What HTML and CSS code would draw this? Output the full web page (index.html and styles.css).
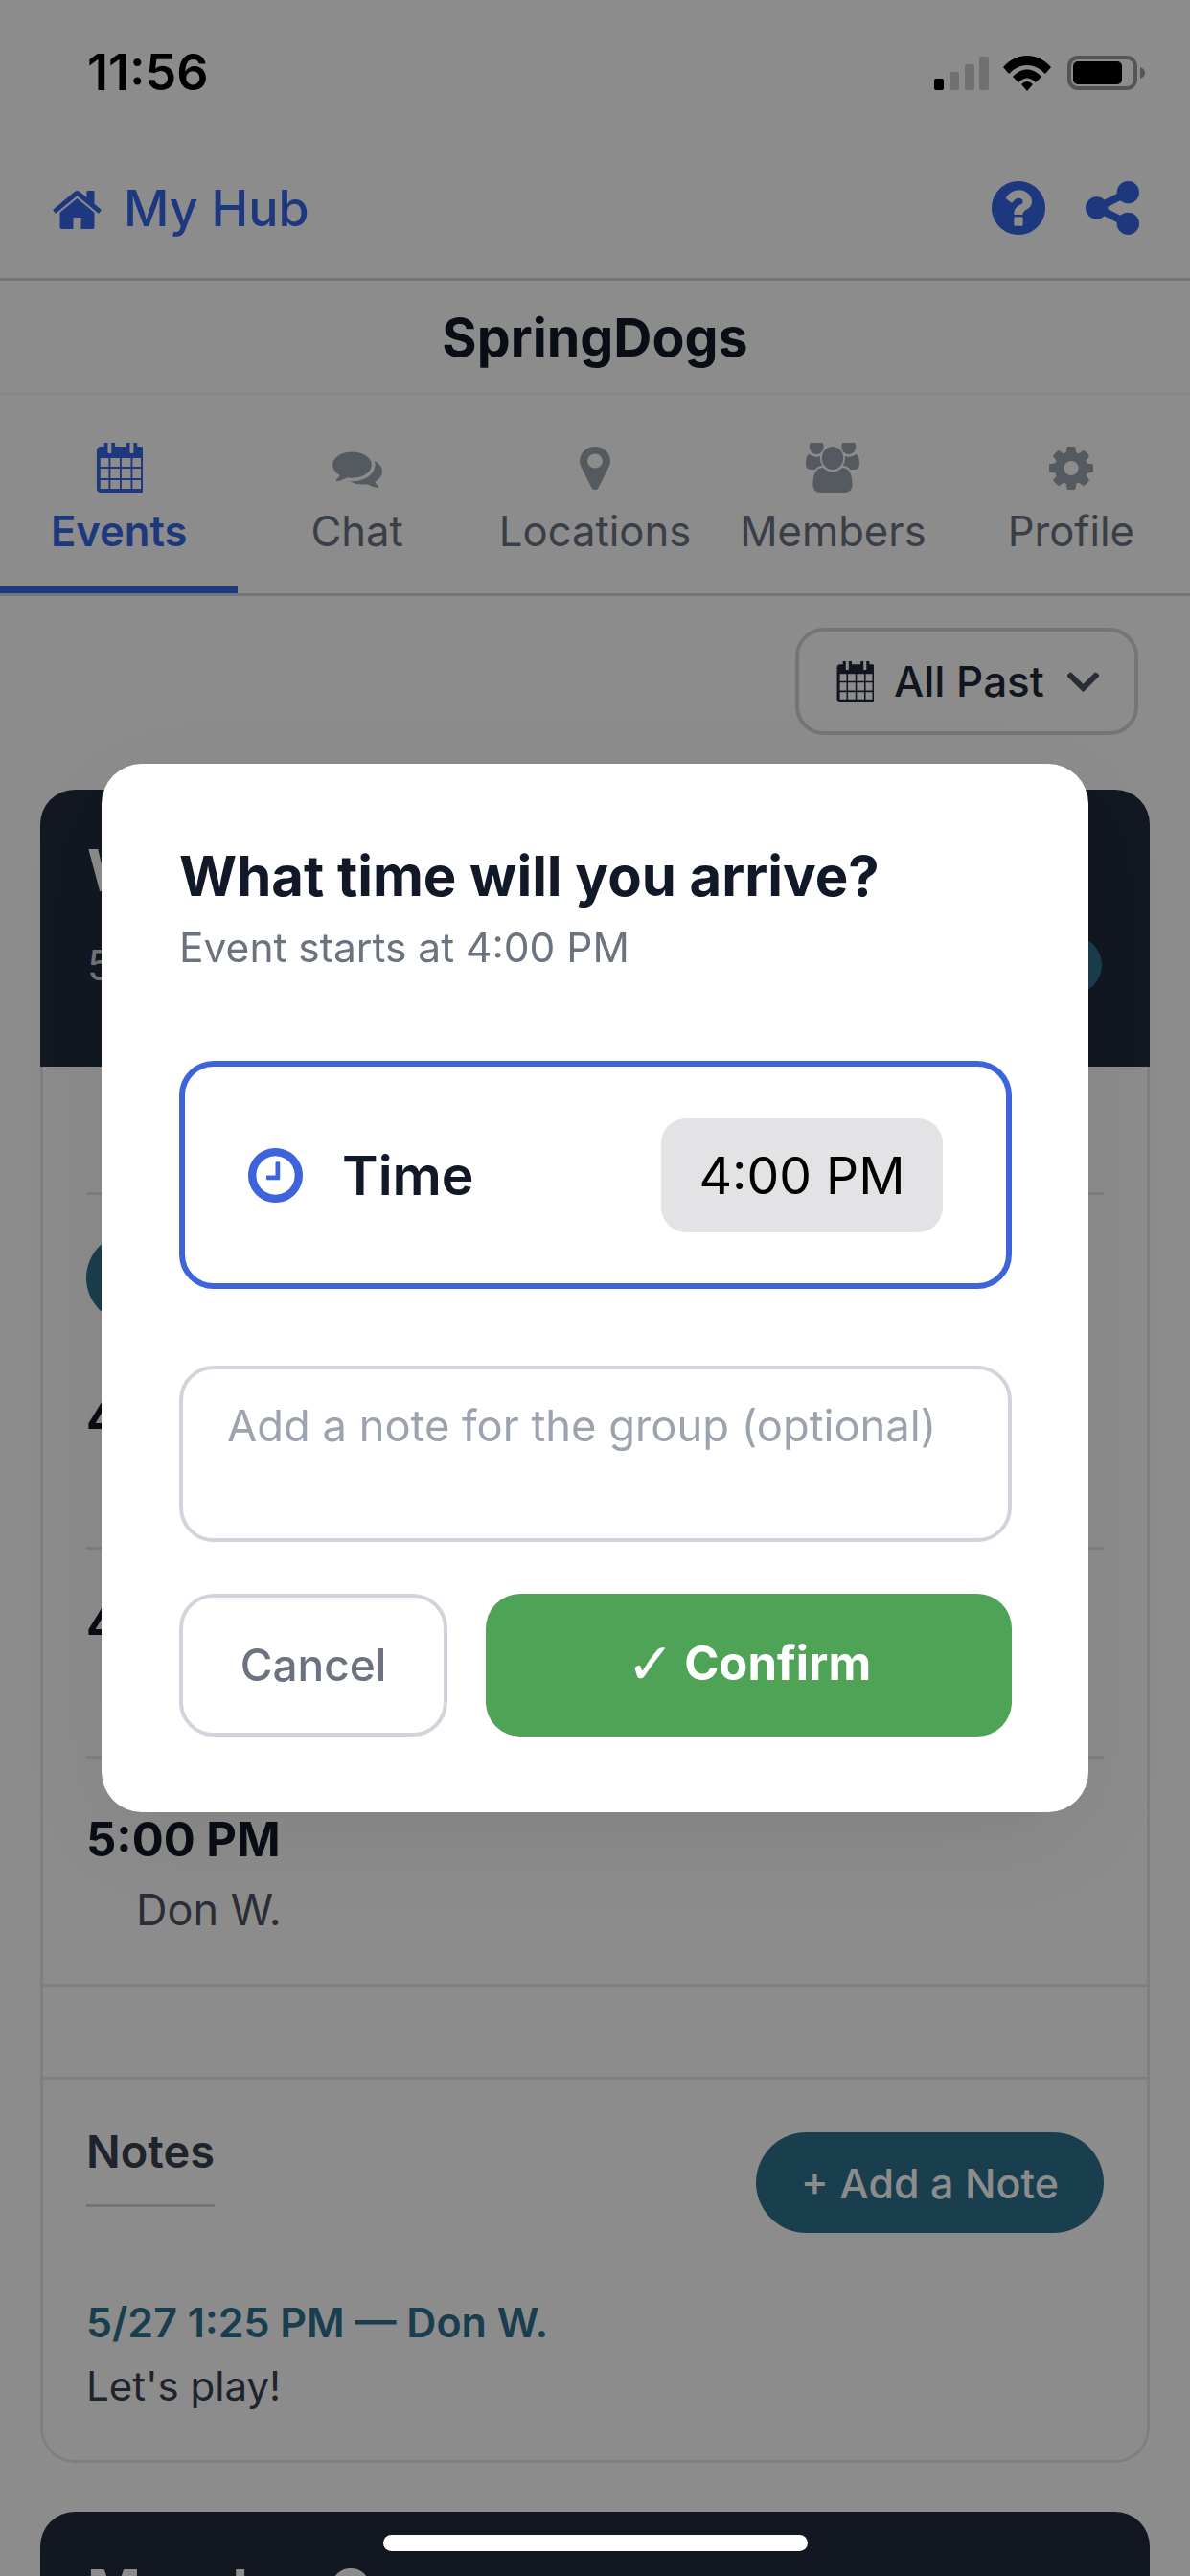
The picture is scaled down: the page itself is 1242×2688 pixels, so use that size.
FILE: index.html
```html
<!DOCTYPE html>
<html lang="en">
<head>
  <meta charset="UTF-8">
  <title>SpringDogs</title>
  <link rel="stylesheet" href="styles.css">
</head>
<body>
<div class="page">
  <!-- status bar -->
  <div class="status">
    <span class="clock">11:56</span>
    <div class="status-icons">
      <svg class="signal" viewBox="0 0 57 35"><rect y="23" width="10" height="12" rx="2" fill="#000"/><rect x="16" y="16" width="10" height="19" rx="2" fill="#ccc"/><rect x="32" y="8" width="10" height="27" rx="2" fill="#ccc"/><rect x="47" width="10" height="35" rx="2" fill="#ccc"/></svg>
      <svg class="wifi" viewBox="0 0 50 37"><path d="M0 12 C14 -4 36 -4 50 12 L44 19 C32 7 18 7 6 19 Z"/><path d="M10 22 C19 12 31 12 40 22 L34 28 C28 22 22 22 16 28 Z"/><path d="M19 30 C23 26 27 26 31 30 L25 37 Z"/></svg>
      <svg class="battery" viewBox="0 0 81 36"><rect x="2" y="2" width="69" height="32" rx="9" fill="none" stroke="#9b9b9b" stroke-width="4"/><rect x="6" y="6" width="51" height="24" rx="5" fill="#000"/><path d="M76 12 C79 13 81 15 81 18 C81 21 79 23 76 24 Z" fill="#9b9b9b"/></svg>
    </div>
  </div>

  <!-- top nav -->
  <div class="hub-bar">
    <a class="hub-link">
      <svg class="icon-home" viewBox="97 128 1598 1408"><path d="M1472 992v480q0 26-19 45t-45 19h-384v-384h-256v384h-384q-26 0-45-19t-19-45v-480q0-1 .5-3t.5-3l575-474 575 474q1 2 1 6zm223-69l-62 74q-8 9-21 11h-3q-13 0-21-7l-692-577-692 577q-12 8-24 7-13-2-21-11l-62-74q-8-10-7-23.5t11-21.5l719-599q32-26 76-26t76 26l244 204v-195q0-14 9-23t23-9h192q14 0 23 9t9 23v408l219 182q10 8 11 21.5t-7 23.5z"/></svg>
      My Hub
    </a>
    <div class="hub-actions">
      <svg class="icon-action" viewBox="128 128 1536 1536"><path d="M1024 1376v-192q0-14-9-23t-23-9h-192q-14 0-23 9t-9 23v192q0 14 9 23t23 9h192q14 0 23-9t9-23zm256-672q0-88-55.5-163t-138.5-116-170-41q-243 0-371 213-15 24 8 42l132 100q7 6 19 6 16 0 25-12 53-68 86-92 34-24 86-24 48 0 85.5 26t37.5 59q0 38-20 61t-68 45q-63 28-115.5 86.5t-52.5 125.5v36q0 14 9 23t23 9h192q14 0 23-9t9-23q0-19 21.5-49.5t54.5-49.5q32-18 49-28.5t46-35 44.5-48 28-60.5 12.5-81zm384 192q0 209-103 385.5t-279.5 279.5-385.5 103-385.5-103-279.5-279.5-103-385.5 103-385.5 279.5-279.5 385.5-103 385.5 103 279.5 279.5 103 385.5z"/></svg>
      <svg class="icon-action" viewBox="128 128 1536 1536"><path d="M1344 1024q133 0 226.5 93.5t93.5 226.5-93.5 226.5-226.5 93.5-226.5-93.5-93.5-226.5q0-12 2-34l-360-180q-92 86-218 86-133 0-226.5-93.5t-93.5-226.5 93.5-226.5 226.5-93.5q126 0 218 86l360-180q-2-22-2-34 0-133 93.5-226.5t226.5-93.5 226.5 93.5 93.5 226.5-93.5 226.5-226.5 93.5q-126 0-218-86l-360 180q2 22 2 34t-2 34l360 180q92-86 218-86z"/></svg>
    </div>
  </div>

  <div class="group-title">SpringDogs</div>

  <!-- tabs -->
  <div class="tabs">
    <div class="tab active">
      <div class="tab-icon-box">
        <svg class="ico-cal" viewBox="0 128 1664 1664" preserveAspectRatio="none"><path d="M192 1664h288v-288h-288v288zm352 0h320v-288h-320v288zm-352-352h288v-320h-288v320zm352 0h320v-320h-320v320zm-352-384h288v-288h-288v288zm736 736h320v-288h-320v288zm-384-736h320v-288h-320v288zm768 736h288v-288h-288v288zm-384-352h320v-320h-320v320zm-352-864v-288q0-13-9.5-22.5t-22.5-9.5h-64q-13 0-22.5 9.5t-9.5 22.5v288q0 13 9.5 22.5t22.5 9.5h64q13 0 22.5-9.5t9.5-22.5zm736 864h288v-320h-288v320zm-384-384h320v-288h-320v288zm384 0h288v-288h-288v288zm32-480v-288q0-13-9.5-22.5t-22.5-9.5h-64q-13 0-22.5 9.5t-9.5 22.5v288q0 13 9.5 22.5t22.5 9.5h64q13 0 22.5-9.5t9.5-22.5zm384-64v1280q0 52-38 90t-90 38h-1408q-52 0-90-38t-38-90v-1280q0-52 38-90t90-38h128v-96q0-66 47-113t113-47h64q66 0 113 47t47 113v96h384v-96q0-66 47-113t113-47h64q66 0 113 47t47 113v96h128q52 0 90 38t38 90z"/></svg>
      </div>
      <span>Events</span>
    </div>
    <div class="tab">
      <div class="tab-icon-box">
        <svg class="ico-chat" viewBox="0 128 1792 1536" preserveAspectRatio="none"><path d="M1408 768q0 139-94 257t-256.5 186.5-353.5 68.5q-86 0-176-16-124 88-278 128-36 9-86 16h-3q-11 0-20.5-8t-11.5-21q-1-3-1-6.5t.5-6.5 2-6l2.5-5 3.5-5.5 4-5 4.5-5 4-4.5q5-6 23-25t26-29.5 22.5-29 25-38.5 20.5-44q-124-72-195-177t-71-224q0-139 94-257t256.5-186.5 353.5-68.5 353.5 68.5 256.5 186.5 94 257zm384 256q0 120-71 224.5t-195 176.5q10 24 20.5 44t25 38.5 22.5 29 26 29.5 23 25q1 1 4 4.5t4.5 5 4 5 3.5 5.5l2.5 5 2 6 .5 6.5-1 6.5q-3 14-13 22t-22 7q-50-7-86-16-154-40-278-128-90 16-176 16-271 0-472-132 58 4 88 4 161 0 309-45t264-129q125-92 192-212t67-254q0-77-23-152 129 71 204 178t75 230z"/></svg>
      </div>
      <span>Chat</span>
    </div>
    <div class="tab">
      <div class="tab-icon-box">
        <svg class="ico-pin" viewBox="384 128 1024 1536" preserveAspectRatio="none"><path d="M1152 640q0-106-75-181t-181-75-181 75-75 181 75 181 181 75 181-75 75-181zm256 0q0 109-33 179l-364 774q-16 33-47.5 52t-67.5 19-67.5-19-46.5-52l-365-774q-33-70-33-179 0-212 150-362t362-150 362 150 150 362z"/></svg>
      </div>
      <span>Locations</span>
    </div>
    <div class="tab">
      <div class="tab-icon-box">
        <svg class="ico-users" viewBox="0 128 1920 1664" preserveAspectRatio="none"><path d="M593 896q-162 5-265 128h-134q-82 0-138-40.5t-56-118.5q0-353 124-353 6 0 43.5 21t97.5 42.5 119 21.5q67 0 133-23-5 37-5 66 0 139 81 256zm1071 637q0 120-73 189.5t-194 69.5h-874q-121 0-194-69.5t-73-189.5q0-53 3.5-103.5t14-109 26.5-108.5 43-97.5 62-81 85.5-53.5 111.5-20q10 0 43 21.5t73 48 107 48 135 21.5 135-21.5 107-48 73-48 43-21.5q61 0 111.5 20t85.5 53.5 62 81 43 97.5 26.5 108.5 14 109 3.5 103.5zm-1024-1277q0 106-75 181t-181 75-181-75-75-181 75-181 181-75 181 75 75 181zm704 384q0 159-112.5 271.5t-271.5 112.5-271.5-112.5-112.5-271.5 112.5-271.5 271.5-112.5 271.5 112.5 112.5 271.5zm576 225q0 78-56 118.5t-138 40.5h-134q-103-123-265-128 81-117 81-256 0-29-5-66 66 23 133 23 59 0 119-21.5t97.5-42.5 43.5-21q124 0 124 353zm-128-609q0 106-75 181t-181 75-181-75-75-181 75-181 181-75 181 75 75 181z"/></svg>
      </div>
      <span>Members</span>
    </div>
    <div class="tab">
      <div class="tab-icon-box">
        <svg class="ico-cog" viewBox="128 128 1536 1536" preserveAspectRatio="none"><path d="M1152 896q0-106-75-181t-181-75-181 75-75 181 75 181 181 75 181-75 75-181zm512-109v222q0 12-8 23t-20 13l-185 28q-19 54-39 91 35 50 107 138 10 12 10 25t-9 23q-27 37-99 108t-94 71q-12 0-26-9l-138-108q-44 23-91 38-16 136-29 186-7 28-36 28h-222q-14 0-24.5-8.5t-11.5-21.5l-28-184q-49-16-90-37l-141 107q-10 9-25 9-14 0-25-11-126-114-165-168-7-10-7-23 0-12 8-23 15-21 51-66.5t54-70.5q-27-50-41-99l-183-27q-13-2-21-12.5t-8-23.5v-222q0-12 8-23t19-13l186-28q14-46 39-92-40-57-107-138-10-12-10-24 0-10 9-23 26-36 98.5-107.5t94.5-71.5q13 0 26 10l138 107q44-23 91-38 16-136 29-186 7-28 36-28h222q14 0 24.5 8.5t11.5 21.5l28 184q49 16 90 37l142-107q9-9 24-9 13 0 25 10 129 119 165 170 7 8 7 22 0 12-8 23-15 21-51 66.5t-54 70.5q26 50 41 98l183 28q13 2 21 12.5t8 23.5z"/></svg>
      </div>
      <span>Profile</span>
    </div>
  </div>

  <!-- filter -->
  <div class="filter-row">
    <div class="filter-btn">
      <svg class="filter-cal" viewBox="0 128 1664 1664" preserveAspectRatio="none"><path d="M192 1664h288v-288h-288v288zm352 0h320v-288h-320v288zm-352-352h288v-320h-288v320zm352 0h320v-320h-320v320zm-352-384h288v-288h-288v288zm736 736h320v-288h-320v288zm-384-736h320v-288h-320v288zm768 736h288v-288h-288v288zm-384-352h320v-320h-320v320zm-352-864v-288q0-13-9.5-22.5t-22.5-9.5h-64q-13 0-22.5 9.5t-9.5 22.5v288q0 13 9.5 22.5t22.5 9.5h64q13 0 22.5-9.5t9.5-22.5zm736 864h288v-320h-288v320zm-384-384h320v-288h-320v288zm384 0h288v-288h-288v288zm32-480v-288q0-13-9.5-22.5t-22.5-9.5h-64q-13 0-22.5 9.5t-9.5 22.5v288q0 13 9.5 22.5t22.5 9.5h64q13 0 22.5-9.5t9.5-22.5zm384-64v1280q0 52-38 90t-90 38h-1408q-52 0-90-38t-38-90v-1280q0-52 38-90t90-38h128v-96q0-66 47-113t113-47h64q66 0 113 47t47 113v96h384v-96q0-66 47-113t113-47h64q66 0 113 47t47 113v96h128q52 0 90 38t38 90z"/></svg>
      <span>All Past</span>
      <svg class="filter-chevron" viewBox="8 123 432 265"><path d="M207.029 381.476L12.686 187.132c-9.373-9.373-9.373-24.569 0-33.941l22.667-22.667c9.357-9.357 24.522-9.375 33.901-.04L224 284.505l154.745-154.021c9.379-9.335 24.544-9.317 33.901.04l22.667 22.667c9.373 9.373 9.373 24.569 0 33.941L240.971 381.476c-9.373 9.372-24.569 9.372-33.942 0z"/></svg>
    </div>
  </div>

  <!-- event card (mostly behind the dialog) -->
  <div class="card">
    <div class="card-head">
      <div class="card-name">W</div>
      <div class="card-sub">
        <span class="card-date">5</span>
        <span class="card-pill"></span>
      </div>
    </div>
    <div class="card-body">
      <div class="row row-first"></div>
      <div class="row row-avatar">
        <div class="avatar"></div>
        <div class="slot-time slot-time-a">4</div>
      </div>
      <div class="row row-second">
        <div class="slot-time">4</div>
      </div>
      <div class="row-wide row-last">
        <div class="slot-time">5:00 PM</div>
        <div class="slot-name">Don W.</div>
      </div>
      <div class="row-wide row-blank"></div>
      <div class="notes">
        <div class="notes-top">
          <h3 class="notes-title">Notes</h3>
          <div class="add-note">+ Add a Note</div>
        </div>
        <div class="note-meta">5/27 1:25 PM — Don W.</div>
        <div class="note-text">Let's play!</div>
      </div>
    </div>
  </div>

  <div class="card-next">
    <div class="card-next-name">Monday G</div>
  </div>
</div>

<!-- arrival time dialog -->
<div class="overlay">
  <div class="modal">
    <h2 class="modal-title">What time will you arrive?</h2>
    <p class="modal-sub">Event starts at 4:00 PM</p>
    <div class="time-box">
      <svg class="icon-clock" viewBox="128 128 1536 1536"><path d="M1024 544v448q0 14-9 23t-23 9h-320q-14 0-23-9t-9-23v-64q0-14 9-23t23-9h224v-352q0-14 9-23t23-9h64q14 0 23 9t9 23zm416 352q0-148-73-273t-198-198-273-73-273 73-198 198-73 273 73 273 198 198 273 73 273-73 198-198 73-273zm224 0q0 209-103 385.5t-279.5 279.5-385.5 103-385.5-103-279.5-279.5-103-385.5 103-385.5 279.5-279.5 385.5-103 385.5 103 279.5 279.5 103 385.5z"/></svg>
      <span class="time-label">Time</span>
      <span class="time-value">4:00 PM</span>
    </div>
    <div class="note-input">Add a note for the group (optional)</div>
    <div class="modal-actions">
      <div class="btn-cancel">Cancel</div>
      <div class="btn-confirm"><span class="check">✓</span> Confirm</div>
    </div>
  </div>
</div>

<div class="home-indicator"></div>
</body>
</html>
```

FILE: styles.css
```css
* {
  box-sizing: border-box;
}
body {
  margin: 0;
  width: 1242px;
  height: 2688px;
  overflow: hidden;
  font-family: Inter, "Liberation Sans", sans-serif;
  background-color: #fff;
  color: #111827;
}
.page {
  height: 2688px;
  overflow: hidden;
}

/* status bar */
.status {
  height: 170px;
  padding: 47px 47px 0 91px;
  display: flex;
  justify-content: space-between;
  align-items: flex-start;
}
.clock {
  font-size: 52px;
  line-height: 58px;
  font-weight: 600;
  color: #000;
}
.status-icons {
  display: flex;
  align-items: center;
  gap: 17px;
  height: 58px;
}
.signal {
  width: 57px;
  height: 35px;
  margin-right: -2px;
}
.wifi {
  width: 50px;
  height: 37px;
}
.battery {
  width: 81px;
  height: 36px;
}

/* top nav */
.hub-bar {
  height: 123px;
  padding: 0 53px 26px 54px;
  display: flex;
  justify-content: space-between;
  align-items: center;
  border-bottom: 3px solid #d1d5db;
}
.hub-link {
  display: flex;
  align-items: center;
  gap: 22px;
  font-size: 52px;
  font-weight: 500;
  color: #3867e8;
}
.icon-home {
  width: 53px;
  height: 44px;
  fill: #3867e8;
}
.hub-actions {
  display: flex;
  gap: 42px;
}
.icon-action {
  width: 56px;
  height: 56px;
  fill: #3867e8;
}
.group-title {
  height: 119px;
  display: flex;
  align-items: center;
  justify-content: center;
  font-size: 55.5px;
  font-weight: 700;
  border-bottom: 2px solid #f3f4f6;
}

/* tabs */
.tabs {
  height: 210px;
  display: flex;
  border-bottom: 3px solid #d1d5db;
}
.tab {
  flex: 1;
  height: 207px;
  padding-top: 50px;
  display: flex;
  flex-direction: column;
  align-items: center;
  font-size: 43.6px;
  line-height: 48px;
  color: #6b7280;
  fill: #9ca3af;
}
.tab span {
  margin-top: 17px;
}
.tab-icon-box {
  height: 52px;
  display: flex;
  align-items: center;
}
.ico-cal {
  width: 50px;
  height: 52px;
}
.ico-chat {
  width: 52px;
  height: 41px;
}
.ico-pin {
  width: 32px;
  height: 45px;
}
.ico-users {
  width: 56px;
  height: 52px;
}
.ico-cog {
  width: 46px;
  height: 45px;
}
.tab.active {
  color: #3867e8;
  fill: #3867e8;
  font-weight: 600;
  border-bottom: 7px solid #3867e8;
}

/* filter */
.filter-row {
  display: flex;
  justify-content: flex-end;
  padding: 33px 54px 57px 0;
}
.filter-btn {
  width: 358px;
  height: 112px;
  padding-left: 38px;
  display: flex;
  align-items: center;
  border: 4px solid #d1d5db;
  border-radius: 30px;
  font-size: 44px;
  font-weight: 500;
  color: #1f2937;
}
.filter-cal {
  width: 40px;
  height: 43px;
  fill: #1f2937;
}
.filter-btn span {
  margin-left: 21px;
}
.filter-chevron {
  width: 33px;
  height: 21px;
  margin-left: 24px;
  fill: #4b5563;
}

/* event card */
.card {
  margin: 0 42px;
  height: 1746px;
  border-radius: 36px;
  overflow: hidden;
}
.card-head {
  height: 289px;
  padding: 58px 50px 0 49px;
  background-color: #212b3e;
}
.card-name {
  font-size: 60px;
  line-height: 52px;
  font-weight: 700;
  color: #fff;
}
.card-sub {
  margin-top: 43px;
  height: 60px;
  display: flex;
  justify-content: space-between;
  align-items: center;
}
.card-date {
  font-size: 44px;
  color: #d1d5db;
}
.card-pill {
  width: 160px;
  height: 60px;
  border-radius: 30px;
  background-color: #2f718e;
}
.card-body {
  height: 1457px;
  border: 3px solid #e5e7eb;
  border-top: none;
  border-radius: 0 0 36px 36px;
}
.row {
  margin: 0 45px;
  border-bottom: 3px solid #e5e7eb;
}
.row-first {
  height: 134px;
}
.row-avatar {
  height: 370px;
  padding-top: 40px;
}
.row-second {
  height: 218px;
  padding-top: 48px;
}
.row-wide {
  padding: 0 45px;
  border-bottom: 3px solid #e5e7eb;
}
.row-last {
  height: 238px;
  padding-top: 55px;
}
.row-blank {
  height: 97px;
}
.avatar {
  width: 93px;
  height: 93px;
  border-radius: 50%;
  background-color: #2f718e;
}
.slot-time {
  font-size: 49px;
  line-height: 60px;
  font-weight: 700;
  color: #111827;
}
.slot-time-a {
  margin-top: 70px;
}
.slot-name {
  margin-top: 15px;
  padding-left: 52px;
  font-size: 45px;
  line-height: 56px;
  color: #4b5563;
}

/* notes */
.notes {
  padding: 50px 45px 0;
}
.notes-top {
  display: flex;
  justify-content: space-between;
  align-items: flex-start;
}
.notes-title {
  margin: 0;
  padding-bottom: 30px;
  border-bottom: 3px solid #d1d5db;
  font-size: 47px;
  line-height: 50px;
  font-weight: 600;
  color: #374151;
}
.add-note {
  margin-top: 5px;
  width: 363px;
  height: 105px;
  display: flex;
  align-items: center;
  justify-content: center;
  border-radius: 53px;
  background-color: #2f718e;
  font-size: 43px;
  font-weight: 500;
  color: #fff;
}
.note-meta {
  margin-top: 68px;
  font-size: 43px;
  line-height: 50px;
  font-weight: 600;
  color: #2f718e;
}
.note-text {
  margin-top: 17px;
  font-size: 42px;
  line-height: 50px;
  color: #374151;
}

/* next card */
.card-next {
  margin: 51px 42px 0;
  height: 200px;
  padding: 46px 49px 0;
  border-radius: 36px 36px 0 0;
  background-color: #212b3e;
}
.card-next-name {
  font-size: 60px;
  line-height: 72px;
  font-weight: 700;
  color: #fff;
}

/* dialog */
.overlay {
  position: fixed;
  inset: 0;
  display: flex;
  align-items: center;
  justify-content: center;
  background-color: rgba(0, 0, 0, 0.45);
}
.modal {
  width: 1030px;
  height: 1094px;
  padding: 83px 80px 0 81px;
  border-radius: 42px;
  background-color: #fff;
  box-shadow: 0 30px 120px rgba(0, 0, 0, 0.08);
}
.modal-title {
  margin: 0;
  font-size: 58px;
  line-height: 68px;
  font-weight: 700;
  color: #111827;
}
.modal-sub {
  margin: 16px 0 0;
  font-size: 42.5px;
  line-height: 50px;
  color: #6b7280;
}
.time-box {
  margin-top: 93px;
  height: 238px;
  padding: 0 66px;
  display: flex;
  align-items: center;
  border: 6px solid #3d63dd;
  border-radius: 36px;
}
.icon-clock {
  width: 57px;
  height: 57px;
  fill: #3d63dd;
}
.time-label {
  margin-left: 41px;
  font-size: 57px;
  font-weight: 600;
  color: #111827;
}
.time-value {
  margin-left: auto;
  width: 294px;
  height: 119px;
  display: flex;
  align-items: center;
  justify-content: center;
  border-radius: 26px;
  background-color: #e3e3e6;
  font-size: 53.5px;
  color: #000;
}
.note-input {
  margin-top: 80px;
  height: 184px;
  padding: 31px 46px 0;
  border: 4px solid #d1d5db;
  border-radius: 36px;
  font-size: 45.3px;
  line-height: 56px;
  color: #9ca3af;
}
.modal-actions {
  margin-top: 54px;
  display: flex;
  gap: 40px;
}
.btn-cancel {
  width: 280px;
  height: 149px;
  padding-bottom: 2px;
  display: flex;
  align-items: center;
  justify-content: center;
  border: 4px solid #d1d5db;
  border-radius: 36px;
  font-size: 46px;
  font-weight: 500;
  color: #6b7280;
}
.btn-confirm {
  flex: 1;
  height: 149px;
  padding-bottom: 3px;
  display: flex;
  align-items: center;
  justify-content: center;
  gap: 10px;
  border-radius: 36px;
  background-color: #4ea356;
  font-size: 49px;
  line-height: 60px;
  font-weight: 700;
  color: #fff;
}
.check {
  font-family: "DejaVu Sans", sans-serif;
  font-size: 60px;
  font-weight: 700;
}
.home-indicator {
  position: fixed;
  left: 400px;
  top: 2645px;
  width: 443px;
  height: 17px;
  border-radius: 9px;
  background-color: #fff;
}
```
